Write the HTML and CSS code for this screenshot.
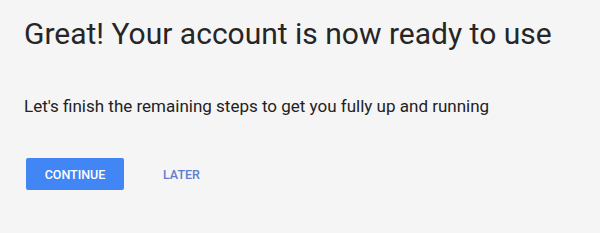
FILE: index.html
```html
<!DOCTYPE html>
<html>
	<head>
		<title>Account ready</title>
		<link rel="stylesheet" href="styles.css">
	</head>
	<body>
		<div class="readyPanel">
			<h1 class="readyTitle">Great! Your account is now ready to use</h1>
			<p class="readyText">Let's finish the remaining steps to get you fully up and running</p>
			<div class="readyActions">
				<button class="btnContinue">CONTINUE</button>
				<button class="btnLater">LATER</button>
			</div>
		</div>
	</body>
</html>
```

FILE: styles.css
```css
body {
	margin: 0;
	background-color: #f5f5f5;
	font-family: Roboto, "Liberation Sans", sans-serif;
}

.readyPanel {
	padding: 16px 24px 0 24px;
}

.readyTitle {
	margin: 0;
	font-size: 30px;
	font-weight: 400;
	line-height: 36px;
	color: #262626;
}

.readyText {
	margin: 44px 0 0 0;
	font-size: 17px;
	line-height: 20px;
	color: #222;
}

.readyActions {
	display: flex;
	align-items: center;
	gap: 21px;
	margin-top: 42px;
	margin-left: 2px;
}

.readyActions button {
	border: none;
	font-family: Roboto, "Liberation Sans", sans-serif;
	font-size: 12.5px;
	font-weight: 500;
	cursor: pointer;
}

.btnContinue {
	background-color: #4285f4;
	color: #fff;
	width: 98px;
	height: 32px;
	border-radius: 2px;
}

.btnLater {
	background: none;
	color: #5c7fcf;
	height: 32px;
	padding: 0 18px;
}
```
